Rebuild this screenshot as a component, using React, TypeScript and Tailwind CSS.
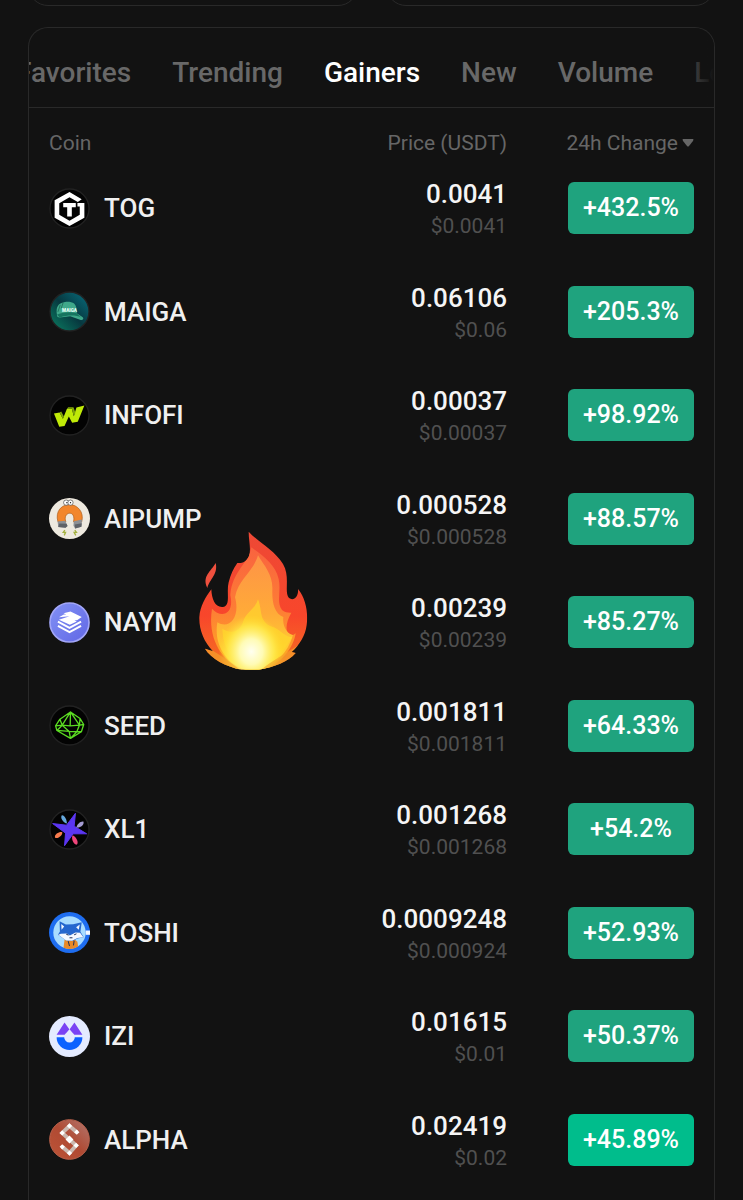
import { ReactNode, useState } from "react";
import clsx from "clsx";

interface Coin {
    symbol: string;
    price: string;
    fiat: string;
    change: string;
    icon: ReactNode;
    updated?: boolean;
}

// Every logo is drawn around the centre of a 124 unit box
const CoinIcon = ({ children }: { children: ReactNode }) => (
    <svg
        viewBox="-62 -62 124 124"
        className="size-[41px] shrink-0"
        aria-hidden="true"
    >
        {children}
    </svg>
);

const DarkDisc = () => (
    <circle r="59" fill="#030303" stroke="#222" strokeWidth="4" />
);

const TogIcon = () => (
    <CoinIcon>
        <DarkDisc />
        <path
            d="M0-50 37-28 25-20 0-34-31-16V19L0 37 31 19V-6H24V-17H45V28L0 53-45 28V-25Z"
            fill="#fff"
        />
        <path d="M-19-17H19V-4H7V24H-7V-4H-19Z" fill="#fff" />
    </CoinIcon>
);

const MaigaIcon = () => (
    <CoinIcon>
        <defs>
            <linearGradient id="maiga" x1="1" y1="0" x2="0" y2="1">
                <stop offset="0" stopColor="#087081" />
                <stop offset=".5" stopColor="#07383f" />
                <stop offset="1" stopColor="#0b8264" />
            </linearGradient>
        </defs>
        <circle r="59" fill="url(#maiga)" stroke="#222" strokeWidth="4" />
        <path
            d="M-38 10C-42-12-34-25-19-27-13-31 6-31 14-24 21-17 23-4 22 5L39 17C44 21 42 26 34 26L2 14-29 18C-36 18-39 15-38 10Z"
            fill="#3fa88a"
        />
        <path
            d="M-38 10C-24 1 5 0 22 5L35 18C22 11-5 10-29 18Z"
            fill="#16745f"
        />
        <path
            d="M-28-20-35 1M-19-27-25-10"
            stroke="#24745f"
            strokeWidth="3"
            fill="none"
        />
        <text
            x="0"
            y="0"
            textAnchor="middle"
            fontFamily="Roboto, sans-serif"
            fontSize="14"
            fontWeight="900"
            fill="#e5fff7"
        >
            MAIGA
        </text>
    </CoinIcon>
);

const InfofiIcon = () => (
    <CoinIcon>
        <DarkDisc />
        <path
            d="M-47-6-30-9-20 10-8-20 7-21 13 2 21-24 45-30 25 19 8 22-2 3-15 32-31 34Z"
            fill="#c0ea08"
        />
        <path
            d="M-30-9-25-12-17 3-20 10ZM7-21 12-25 18-8 13 2ZM-8-20-4-25 12-25 7-21Z"
            fill="#82a80a"
        />
    </CoinIcon>
);

const AipumpIcon = () => (
    <CoinIcon>
        <circle r="62" fill="#eee9df" />
        <path
            d="M-35 10C-44-22-24-42 0-42S45-20 37 10L12 10C16-6 10-16 1-16S-17-6-11 10Z"
            fill="#f2862c"
            stroke="#a85a18"
            strokeWidth="2"
        />
        <path
            d="M-36 9-13 7-6 23-12 28-34 26ZM13 8 38 3 36 25 17 30 12 22Z"
            fill="#8d9095"
        />
        <path
            d="M-34 26-31 15-9 16-6 23-12 28ZM17 30 16 18 37 14 36 25Z"
            fill="#5f6268"
        />
        <circle cx="-10" cy="-48" r="8" fill="#fff" stroke="#444" strokeWidth="2" />
        <circle cx="3" cy="-48" r="8" fill="#fff" stroke="#444" strokeWidth="2" />
        <circle cx="-8" cy="-48" r="2" fill="#111" />
        <circle cx="3" cy="-48" r="2" fill="#111" />
        <path
            d="M-14 35-19 42H-12L-16 51M16 35 21 42H14L19 51"
            fill="none"
            stroke="#a4b23f"
            strokeWidth="4"
        />
    </CoinIcon>
);

const NaymIcon = () => (
    <CoinIcon>
        <defs>
            <linearGradient id="naym" x1="0" y1="0" x2="1" y2="1">
                <stop offset="0" stopColor="#8291f5" />
                <stop offset="1" stopColor="#6167e5" />
            </linearGradient>
        </defs>
        <circle r="59" fill="url(#naym)" stroke="#a2a6f8" strokeWidth="5" />
        <path
            d="M-32-16-17-24H-10L-18-28 3-33 37-17 23-7H15L22-3 1 7-32-8 0-19Z"
            fill="#fff"
        />
        <path
            d="M-35-3 0 16 35-3M-35 10 0 29 35 10"
            fill="none"
            stroke="#fff"
            strokeWidth="6"
        />
    </CoinIcon>
);

const SeedIcon = () => (
    <CoinIcon>
        <DarkDisc />
        <path
            d="M3-41-29-19-42 1-38 15 3 39 36 19 43-3 32-21ZM3-41-22-1-42 1M3-41 2 1-22-1-1 18-38 15M3-41 30-1 43-3M2 1 30-1 22 19-1 18 3 39 22 19 36 19M-29-19-22-1M32-21 30-1M-38 15-22-1"
            fill="none"
            stroke="#5bdc22"
            strokeWidth="4"
            strokeLinejoin="round"
        />
    </CoinIcon>
);

const Xl1Icon = () => (
    <CoinIcon>
        <DarkDisc />
        <path
            d="M18-49 14-10 52 13 11 13-15 49-12 11-51-18-9-13Z"
            fill="#5b36f2"
            stroke="#5b36f2"
            strokeWidth="3"
            strokeLinejoin="round"
        />
        <path d="M-23-43C-14-44-7-26-8-18-17-18-30-35-23-43Z" fill="#65a7dc" />
        <path d="M42-24C46-14 32-4 21-6 22-16 34-26 42-24Z" fill="#a49bd2" />
        <path d="M-44 24C-46 14-31 6-22 8-20 17-36 30-44 24Z" fill="#f77b4e" />
        <path d="M21 46C11 44 5 27 9 18 18 18 31 41 21 46Z" fill="#ef467b" />
    </CoinIcon>
);

const ToshiIcon = () => (
    <CoinIcon>
        <circle r="62" fill="#1e6df0" />
        <circle r="49" fill="#a8dcff" />
        <path
            d="M-18 46-15 22 14 20 24 28 26 42A49 49 0 0 1-18 46Z"
            fill="#e88a28"
        />
        <path
            d="M-30-34-11-24 11-25 37-31 33-2 43 14 24 18 10 26-10 24-35 7-29-3Z"
            fill="#2567ce"
        />
        <path
            d="M-25-26-16-18-24-8ZM31-24 20-16 28-8ZM-26 4-8 3 1 9 18 0 32 1 42 14 24 17 8 25-10 24-34 7Z"
            fill="#f4f8ff"
        />
        <path
            d="M-10 5-3 8M14 7 21 4M0 16 9 16M-4 26 0 41M14 25 12 39"
            stroke="#1c2d55"
            strokeWidth="3"
            fill="none"
        />
        <path d="M49-6H62V7H49Z" fill="#f3f8ff" />
    </CoinIcon>
);

const IziIcon = () => (
    <CoinIcon>
        <circle r="62" fill="#e4ebff" />
        <path d="M-39-5-15-42 0-21 15-42 39-5Z" fill="#7a43f4" />
        <path d="M-39 2H39A39 39 0 0 1-39 2Z" fill="#0b62ff" />
        <path
            d="M0-23C-5-14-16-9-16 2A16 16 0 0 0 16 2C16-9 5-14 0-23Z"
            fill="#e4ebff"
        />
    </CoinIcon>
);

const AlphaIcon = () => (
    <CoinIcon>
        <defs>
            <linearGradient id="alpha" x1="1" y1="0" x2="0" y2="1">
                <stop offset="0" stopColor="#b27870" />
                <stop offset=".5" stopColor="#b04a33" />
                <stop offset="1" stopColor="#bd5437" />
            </linearGradient>
        </defs>
        <circle r="60" fill="url(#alpha)" stroke="#b9614b" strokeWidth="3" />
        <path
            d="M22-22 0-41-22-20 20 18 0 41-22 22"
            fill="none"
            stroke="#cbb9b1"
            strokeWidth="12"
        />
        <path
            d="M22-30 30-22 22-14 14-22ZM0-49 8-41 0-33-8-41ZM-22-28-14-20-22-12-30-20ZM0-12 12 0 0 12-12 0ZM20 10 28 18 20 26 12 18ZM0 33 8 41 0 49-8 41ZM-22 14-14 22-22 30-30 22Z"
            fill="#fff"
        />
    </CoinIcon>
);

const Flame = () => (
    <svg
        viewBox="0 0 390 480"
        className="pointer-events-none absolute left-[190px] top-[520px] w-[130px]"
        aria-hidden="true"
    >
        <defs>
            <linearGradient id="flame-outer" x1="0" y1="0" x2="0" y2="1">
                <stop offset="0" stopColor="#ec4937" />
                <stop offset=".6" stopColor="#f8462b" />
                <stop offset=".85" stopColor="#f56a23" />
                <stop offset="1" stopColor="#f7a62d" />
            </linearGradient>
            <linearGradient id="flame-mid" x1="0" y1="0" x2="0" y2="1">
                <stop offset="0" stopColor="#f9633f" />
                <stop offset=".5" stopColor="#fd7d35" />
                <stop offset="1" stopColor="#ffb31f" />
            </linearGradient>
            <linearGradient id="flame-inner" x1="0" y1="0" x2="0" y2="1">
                <stop offset="0" stopColor="#fe9347" />
                <stop offset=".5" stopColor="#ffab38" />
                <stop offset="1" stopColor="#ffe22e" />
            </linearGradient>
            <radialGradient id="flame-glow">
                <stop offset="0" stopColor="#fffff0" />
                <stop offset=".35" stopColor="#fffbb5" />
                <stop offset=".7" stopColor="#ffee55" stopOpacity=".7" />
                <stop offset="1" stopColor="#ffd928" stopOpacity="0" />
            </radialGradient>
            <clipPath id="flame-shape">
                <path d="M176 35C202 64 253 90 279 132 302 171 281 216 297 234 311 244 326 231 324 207 348 236 355 280 350 315 346 347 329 374 305 396L317 399C294 426 253 441 207 449H155C107 440 63 416 45 386L69 394C42 366 27 330 28 292 30 258 47 231 64 208 65 238 76 263 98 261 124 257 108 218 116 187 122 164 130 145 142 129 156 131 169 125 177 108 184 87 176 62 176 35Z" />
            </clipPath>
        </defs>
        <path
            d="M77 129C85 164 59 176 52 204 35 168 63 155 77 129Z"
            fill="#ef503e"
        />
        <g clipPath="url(#flame-shape)">
            <path d="M0 0H390V480H0Z" fill="url(#flame-outer)" />
            <path
                d="M66 266C92 295 134 286 121 225 126 155 176 130 184 82 216 106 256 132 266 177 274 215 258 244 276 270 287 279 296 278 304 278 288 305 284 334 299 346 307 348 312 344 317 340 310 390 260 449 190 455 105 442 50 367 66 266Z"
                fill="url(#flame-mid)"
            />
            <path
                d="M204 106C223 138 250 165 247 212 246 247 253 281 280 291 276 324 296 344 309 345 292 407 240 450 184 455 111 439 70 375 82 307 120 330 151 289 135 232 144 177 189 158 204 106Z"
                fill="url(#flame-inner)"
            />
            <path
                d="M204 238C217 269 207 304 242 319 270 326 280 350 307 352 277 397 249 450 183 451 123 430 99 381 97 326 128 346 151 330 159 306 168 275 196 267 204 238Z"
                fill="#ffda2b"
                opacity=".65"
            />
            <ellipse cx="184" cy="395" rx="98" ry="110" fill="url(#flame-glow)" />
            <path
                d="M40 375C82 400 114 420 151 451H45ZM326 375C284 402 247 421 211 451H325Z"
                fill="#f5a52b"
                opacity=".65"
            />
        </g>
    </svg>
);

const TABS = ["Favorites", "Trending", "Gainers", "New", "Volume", "Losers"];

const COINS: Coin[] = [
    { symbol: "TOG", price: "0.0041", fiat: "$0.0041", change: "+432.5%", icon: <TogIcon /> },
    { symbol: "MAIGA", price: "0.06106", fiat: "$0.06", change: "+205.3%", icon: <MaigaIcon /> },
    { symbol: "INFOFI", price: "0.00037", fiat: "$0.00037", change: "+98.92%", icon: <InfofiIcon /> },
    { symbol: "AIPUMP", price: "0.000528", fiat: "$0.000528", change: "+88.57%", icon: <AipumpIcon /> },
    { symbol: "NAYM", price: "0.00239", fiat: "$0.00239", change: "+85.27%", icon: <NaymIcon /> },
    { symbol: "SEED", price: "0.001811", fiat: "$0.001811", change: "+64.33%", icon: <SeedIcon /> },
    { symbol: "XL1", price: "0.001268", fiat: "$0.001268", change: "+54.2%", icon: <Xl1Icon /> },
    { symbol: "TOSHI", price: "0.0009248", fiat: "$0.000924", change: "+52.93%", icon: <ToshiIcon /> },
    { symbol: "IZI", price: "0.01615", fiat: "$0.01", change: "+50.37%", icon: <IziIcon /> },
    { symbol: "ALPHA", price: "0.02419", fiat: "$0.02", change: "+45.89%", icon: <AlphaIcon />, updated: true },
];

const MarketTabs = () => {
    const [active, setActive] = useState("Gainers");

    return (
        <nav className="relative h-20 overflow-hidden border-b border-[#292929]">
            <div className="-ml-[13px] flex h-full items-center gap-[41px] pt-[10px]">
                {TABS.map((tab) => (
                    <button
                        key={tab}
                        type="button"
                        onClick={() => setActive(tab)}
                        className={clsx(
                            "shrink-0 text-[28px] leading-8 font-medium",
                            tab === active ? "text-white" : "text-[#686868]",
                        )}
                    >
                        {tab}
                    </button>
                ))}
            </div>
            <div className="pointer-events-none absolute inset-y-0 right-0 w-10 bg-linear-to-r from-transparent to-[#121212]" />
        </nav>
    );
};

const CoinTable = () => (
    <table className="w-full">
        <thead>
            <tr className="h-12 align-bottom text-[21px] leading-[26px] text-[#666]">
                <th className="pl-5 text-left font-normal">Coin</th>
                <th className="text-right font-normal">Price (USDT)</th>
                <th className="w-[207px] pr-5 text-right font-normal">
                    <button
                        type="button"
                        className="inline-flex items-center gap-1"
                    >
                        24h Change
                        <svg
                            viewBox="0 0 12 8"
                            className="h-2 w-3"
                            aria-hidden="true"
                        >
                            <path
                                d="M1 0H11Q12 0 11 2L7 7Q6 8 5 7L1 2Q0 0 1 0Z"
                                fill="#666"
                            />
                        </svg>
                    </button>
                </th>
            </tr>
        </thead>
        <tbody>
            {COINS.map((coin) => (
                <tr key={coin.symbol} className="odd:h-[104px] even:h-[103px]">
                    <td className="pl-5">
                        <div className="flex items-center gap-[14px] text-[26px] leading-8 font-medium text-[#f0f0f0]">
                            {coin.icon}
                            {coin.symbol}
                        </div>
                    </td>
                    <td className="pt-1 text-right">
                        <div className="text-[26px] leading-8 font-medium text-[#f5f5f5]">
                            {coin.price}
                        </div>
                        <div className="text-[21px] leading-8 text-[#505050]">
                            {coin.fiat}
                        </div>
                    </td>
                    <td className="pr-5">
                        <div
                            className={clsx(
                                "ml-auto flex h-[52px] w-[126px] items-center justify-center rounded-md text-[25px] leading-8 font-medium text-white",
                                coin.updated ? "bg-[#00bd8c]" : "bg-[#1fa37e]",
                            )}
                        >
                            {coin.change}
                        </div>
                    </td>
                </tr>
            ))}
        </tbody>
    </table>
);

const App = () => {
    return (
        <main className="relative flex min-h-screen flex-col bg-[#121212] px-7 font-[Roboto,sans-serif]">
            {/* lower edge of the two cards above the list */}
            <div className="flex h-[6px] items-end gap-7 overflow-hidden">
                <div className="h-12 flex-1 rounded-[20px] border border-[#292929]" />
                <div className="h-12 flex-1 rounded-[20px] border border-[#292929]" />
            </div>
            <section className="mt-[21px] flex-1 overflow-hidden rounded-t-[20px] border border-b-0 border-[#292929]">
                <MarketTabs />
                <CoinTable />
            </section>
            <Flame />
        </main>
    );
};

export default App;
